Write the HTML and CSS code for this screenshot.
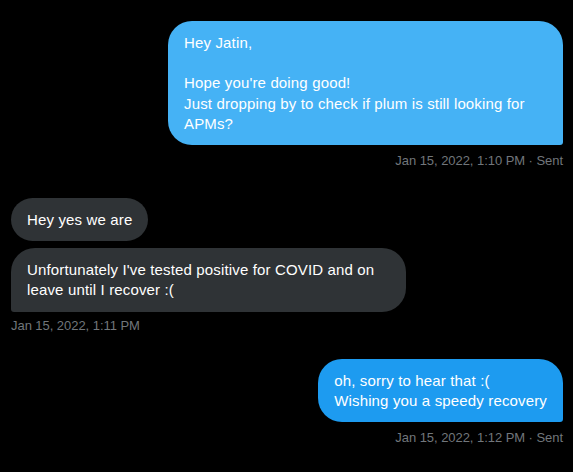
FILE: index.html
```html
<!DOCTYPE html>
<html lang="en">
<head>
<meta charset="utf-8">
<title>Messages</title>
<link rel="stylesheet" href="styles.css">
</head>
<body>
<main class="thread">
  <section class="entry sent">
    <div class="bubble bubble-sent bubble-light">Hey Jatin,

Hope you're doing good!
Just dropping by to check if plum is still looking for APMs?</div>
    <div class="meta">Jan 15, 2022, 1:10 PM · Sent</div>
  </section>

  <section class="entry received group">
    <div class="bubble bubble-received first">Hey yes we are</div>
    <div class="bubble bubble-received last">Unfortunately I've tested positive for COVID and on leave until I recover :(</div>
    <div class="meta">Jan 15, 2022, 1:11 PM</div>
  </section>

  <section class="entry sent second-sent">
    <div class="bubble bubble-sent">oh, sorry to hear that :(
Wishing you a speedy recovery</div>
    <div class="meta">Jan 15, 2022, 1:12 PM · Sent</div>
  </section>
</main>
</body>
</html>
```
FILE: styles.css
```css
html, body {
  margin: 0;
  padding: 0;
  background: #000000;
}

body {
  width: 573px;
  height: 472px;
  overflow: hidden;
  font-family: "Liberation Sans", "DejaVu Sans", sans-serif;
  -webkit-font-smoothing: antialiased;
}

.thread {
  display: flex;
  flex-direction: column;
  padding: 21px 10px 0 11px;
}

.entry {
  display: flex;
  flex-direction: column;
}

.sent {
  align-items: flex-end;
}

.received {
  align-items: flex-start;
  margin-top: 29px;
}

.second-sent {
  margin-top: 25px;
}

.bubble {
  box-sizing: border-box;
  max-width: 395px;
  padding: 12px 16px 11px 16px;
  font-size: 15px;
  line-height: 20.2px;
  letter-spacing: 0.15px;
  color: #ffffff;
  white-space: pre-line;
  border-radius: 24px;
}

.bubble-sent {
  background: #1d9bf0;
  border-bottom-right-radius: 3px;
}

.bubble-light {
  background: #45b2f5;
}

.bubble-received {
  background: #2f3336;
}

.bubble-received.first {
  border-radius: 22px;
}

.bubble-received.last {
  margin-top: 7px;
  border-bottom-left-radius: 3px;
}

.meta {
  margin-top: 6px;
  font-size: 13px;
  line-height: 16px;
  letter-spacing: -0.05px;
  color: #71767b;
}

.sent .meta {
  margin-top: 8px;
}
```
